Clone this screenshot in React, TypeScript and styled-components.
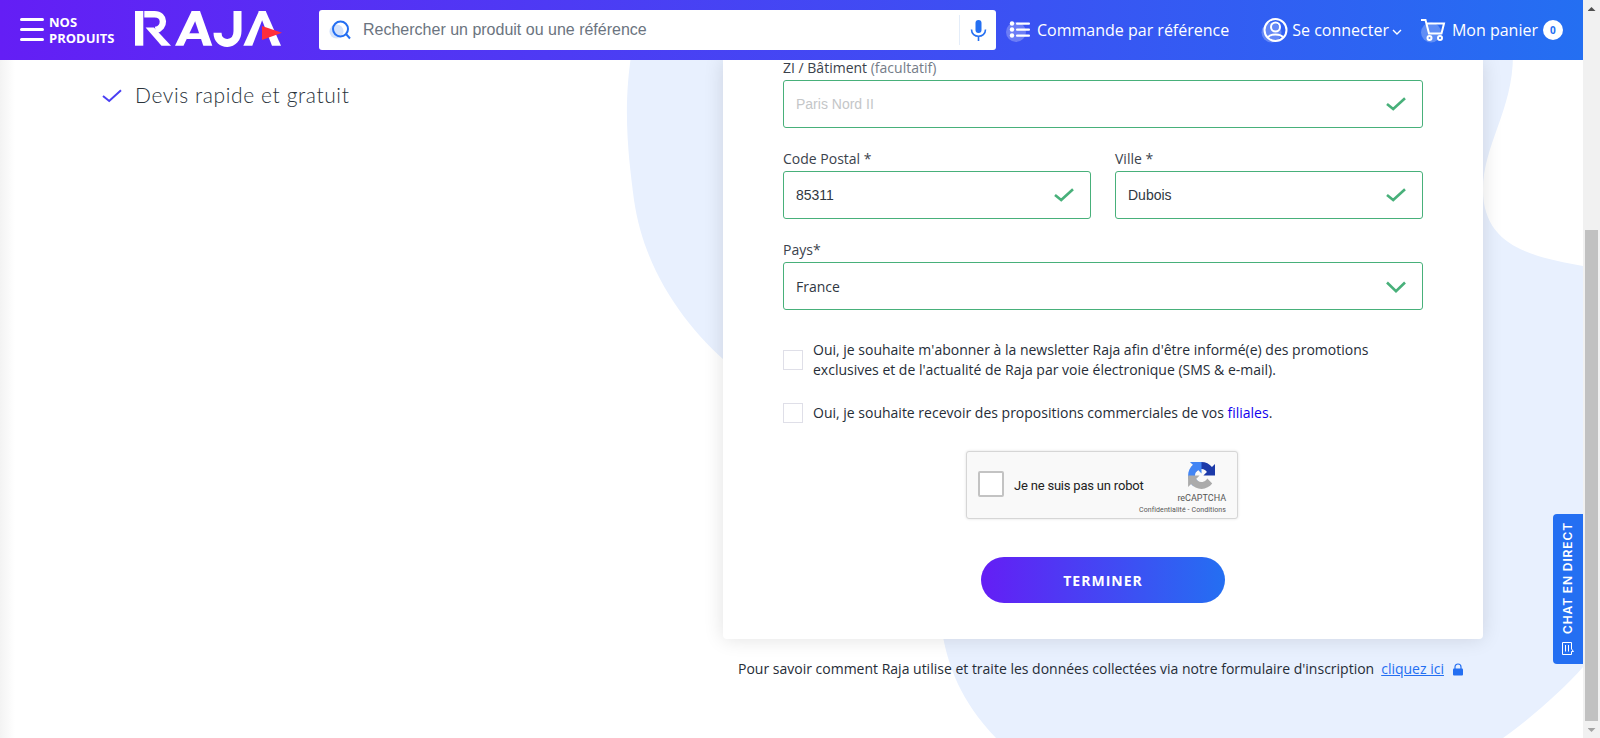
import React from 'react';
import styled, { createGlobalStyle } from 'styled-components';

const Global = createGlobalStyle`
  * { box-sizing: border-box; }
  html, body { margin: 0; padding: 0; background: #fff; overflow: hidden; }
  body { font-family: "Open Sans", sans-serif; color: #333; }
`;

const Window = styled.div`
  display: flex;
  width: 1600px;
  height: 738px;
  overflow: hidden;
`;

const Page = styled.div`
  position: relative;
  width: 1583px;
  height: 738px;
  overflow: hidden;
  display: flex;
  flex-direction: column;
  isolation: isolate;
`;

const Backdrop = styled.svg`
  position: absolute;
  inset: 0;
  z-index: -2;
`;

const EdgeShade = styled.div`
  position: absolute;
  z-index: -1;
  top: 60px;
  left: 0;
  bottom: 0;
  width: 15px;
  background: linear-gradient(90deg, #f3f3f3, #fff);
`;

const Header = styled.header`
  display: flex;
  align-items: center;
  flex: none;
  height: 60px;
  padding-left: 20px;
  background: linear-gradient(90deg, #641ef5, #246ff2);
  color: #fff;
  position: relative;
  z-index: 2;
`;

const MenuLabel = styled.div`
  width: 80px;
  margin-left: 5px;
  font-size: 13px;
  line-height: 16px;
  font-weight: 700;
`;

const Logo = styled.svg`
  margin-left: 6px;
  flex: none;
`;

const SearchBar = styled.div`
  display: flex;
  align-items: center;
  flex: none;
  width: 677px;
  height: 40px;
  margin-left: 37px;
  padding-left: 10px;
  border-radius: 3px;
  background: #fff;
`;

const SearchText = styled.span`
  flex: 1;
  margin-left: 11px;
  font: 16px "Liberation Sans", sans-serif;
  color: #6b7480;
`;

const MicCell = styled.div`
  display: flex;
  align-items: center;
  width: 37px;
  height: 30px;
  padding-left: 10px;
  border-left: 1px solid #e4edf9;
`;

const NavItem = styled.a<{ $left: number; $gap: number }>`
  display: flex;
  align-items: center;
  flex: none;
  margin-left: ${p => p.$left}px;
  gap: ${p => p.$gap}px;
  font-size: 16px;
  white-space: nowrap;
`;

const Caret = styled.svg`
  margin: 4px 0 0 -1px;
`;

const CartCount = styled.span`
  display: flex;
  align-items: center;
  justify-content: center;
  width: 20px;
  height: 20px;
  margin-left: -1px;
  border-radius: 50%;
  background: #fff;
  color: #246ff2;
  font-size: 10px;
  font-weight: 700;
`;

const Main = styled.main`
  display: flex;
  flex: 1;
  min-height: 0;
`;

const Benefits = styled.ul`
  width: 723px;
  margin: 0;
  padding: 18px 0 0 102px;
  list-style: none;
`;

const Benefit = styled.li`
  display: flex;
  align-items: center;
  gap: 13px;
  height: 36px;
  font: 300 21px/32px "Lato", sans-serif;
  letter-spacing: 0.6px;
  color: #2a333b;
`;

const BenefitText = styled.span`
  padding-bottom: 2px;
`;

const FormColumn = styled.section`
  width: 760px;
`;

const Card = styled.form`
  height: 579px;
  padding: 0 60px;
  border-radius: 0 0 4px 4px;
  background: #fff;
  box-shadow: 0 0 20px rgba(0, 0, 0, 0.12);
  display: flex;
  flex-direction: column;
`;

const FieldRow = styled.div`
  display: flex;
  gap: 24px;
  margin-bottom: 23px;
`;

const Field = styled.label`
  flex: 1;
  display: flex;
  flex-direction: column;
  font-size: 14px;
  color: #3b424c;
`;

const FieldName = styled.span`
  height: 20px;
  line-height: 16px;
`;

const Optional = styled.span`
  color: #757c88;
`;

const Control = styled.span<{ $placeholder?: boolean; $select?: boolean }>`
  display: flex;
  align-items: center;
  justify-content: space-between;
  height: 48px;
  padding: ${p => (p.$select ? '1px 16px 0 12px' : '0 16px 0 12px')};
  border: 1px solid #48b07a;
  border-radius: 3px;
  font-family: ${p => (p.$select ? '"Open Sans"' : '"Liberation Sans"')}, sans-serif;
  color: ${p => (p.$placeholder ? '#c4c6c8' : '#2f3742')};
`;

const Consent = styled.label<{ $top: number }>`
  display: flex;
  align-items: center;
  gap: 10px;
  margin-top: ${p => p.$top}px;
  font-size: 14px;
  line-height: 20px;
  color: #262d37;
  white-space: nowrap;
`;

const Tick = styled.span`
  flex: none;
  width: 20px;
  height: 20px;
  border: 1px solid #dfdfe8;
  background: #fff;
`;

const Affiliates = styled.a`
  color: #1200ee;
`;

const Captcha = styled.div`
  display: flex;
  align-self: center;
  align-items: center;
  width: 272px;
  height: 68px;
  margin: 28px 2px 0 0;
  padding: 0 0 2px 11px;
  border: 1px solid #d6d6d6;
  border-radius: 3px;
  background: #f9f9f9;
  box-shadow: 0 0 3px rgba(0, 0, 0, 0.12);
  font-family: Roboto, sans-serif;
`;

const CaptchaBox = styled.span`
  width: 26px;
  height: 26px;
  border: 2px solid #c3c3c3;
  border-radius: 2px;
  background: #fff;
`;

const CaptchaText = styled.span`
  flex: 1;
  margin: 2px 0 0 10px;
  font-size: 13px;
  letter-spacing: -0.2px;
  color: #222;
  white-space: nowrap;
`;

const CaptchaBrand = styled.div`
  display: flex;
  flex-direction: column;
  align-items: flex-end;
  width: 90px;
  padding: 10px 11px 0 0;
  color: #555;
  white-space: nowrap;
`;

const BrandMark = styled.svg`
  margin-right: 11px;
`;

const BrandName = styled.span`
  margin-top: 4px;
  font-size: 9px;
  line-height: 11px;
`;

const BrandLinks = styled.span`
  font-size: 7px;
  line-height: 12px;
  letter-spacing: 0.1px;
`;

const Submit = styled.button`
  align-self: center;
  width: 244px;
  height: 46px;
  margin-top: 38px;
  border: 0;
  border-radius: 23px;
  background: linear-gradient(90deg, #641ef5, #246ff2);
  color: #fff;
  font: 700 14px "Open Sans", sans-serif;
  letter-spacing: 1px;
`;

const Privacy = styled.p`
  display: flex;
  align-items: center;
  margin: 20px 0 0 15px;
  font-size: 14px;
  line-height: 20px;
  color: #262d37;
  white-space: nowrap;
`;

const PrivacyLink = styled.a`
  margin: 0 9px 0 7px;
  color: #246ff2;
  text-decoration: underline;
`;

const ChatTab = styled.div`
  position: absolute;
  right: 0;
  top: 514px;
  width: 30px;
  height: 150px;
  padding-bottom: 9px;
  border-radius: 4px 0 0 4px;
  background: #246ff2;
  color: #fff;
  display: flex;
  flex-direction: column;
  align-items: center;
  justify-content: flex-end;
  gap: 8px;
`;

const ChatText = styled.span`
  writing-mode: vertical-rl;
  transform: rotate(180deg);
  font: 600 12px/30px Inter, sans-serif;
  letter-spacing: 0.88px;
  white-space: nowrap;
`;

const Scrollbar = styled.div`
  display: flex;
  flex-direction: column;
  align-items: center;
  width: 17px;
  background: #f1f1f1;
`;

const Arrow = styled.span<{ $down?: boolean }>`
  width: 8px;
  height: 4px;
  background: ${p => (p.$down ? '#a3a3a3' : '#505050')};
  clip-path: ${p => (p.$down ? 'polygon(0 0, 100% 0, 50% 100%)' : 'polygon(0 100%, 50% 0, 100% 100%)')};
  margin-top: 7px;
`;

const Thumb = styled.div`
  width: 13px;
  height: 491px;
  margin-top: 219px;
  background: #c1c1c1;
`;

const Check = ({ color = '#48b07a', width = 2.6 }) => (
  <svg width="20" height="14" viewBox="0 0 20 14" fill="none" stroke={color} strokeWidth={width}>
    <path d="M1 7 L7.2 12 L19 1.2" />
  </svg>
);

export default function App() {
  return (
    <Window>
      <Global />
      <Page>
        <Backdrop width="1583" height="738" viewBox="0 0 1583 738" fill="#e8f0fe">
          <path d="M632 50C622 110 629 160 634 200C644 270 685 327 730 365L1000 365L943 637C949 667 960 700 996 738L1503 738C1530 719 1565 688 1583 667L1583 266C1532 257 1483 246 1483 190C1483 145 1513 110 1513 55Z" />
        </Backdrop>
        <EdgeShade />
        <Header>
          <svg width="24" height="24" viewBox="0 0 24 24" stroke="#fff" strokeWidth="3" strokeLinecap="round">
            <path d="M1.5 1.500H22.500M1.500 11.500H22.500M1.500 21.500H22.500" />
          </svg>
          <MenuLabel>NOS PRODUITS</MenuLabel>
          <Logo width="147" height="38" viewBox="0 0 147 38" fill="#fff">
            <path d="M0 0H8.300V34.700H0Z" />
            <path d="M9.300 3.200H19.500C30.500 3.200 30.500 17 20.500 19" fill="none" stroke="#fff" strokeWidth="6.400" />
            <path d="M10.600 16.500H19L36 34.700H26.500Z" />
            <path d="M40 34.700L56.700 0H65L48.500 34.700Z" />
            <path d="M56.700 0H65L77.300 34.700H68.300Z" />
            <path d="M51.500 22.300H70V28H51.500Z" />
            <path d="M102.500 0V20C102.500 35.600 82.500 35.600 82.500 21.700" fill="none" stroke="#fff" strokeWidth="8" />
            <path d="M108.300 34.700L124 0H130.700L117.300 34.700Z" />
            <path d="M123.500 0H130.700L146 34.700H137Z" />
            <path d="M127 15L147 21.700L127 29Z" fill="#ff2d3b" />
          </Logo>
          <SearchBar>
            <svg width="23" height="22" viewBox="0 0 23 22" fill="none">
              <circle cx="7.500" cy="12.500" r="7" fill="#d3e2fc" />
              <circle cx="11.500" cy="10" r="7.500" stroke="#246ff2" strokeWidth="2" />
              <path d="M17 15L21 19.500" stroke="#246ff2" strokeWidth="2" />
            </svg>
            <SearchText>Rechercher un produit ou une référence</SearchText>
            <MicCell>
              <svg width="17" height="22" viewBox="0 0 17 22" fill="none" stroke="#246ff2" strokeWidth="1.600">
                <rect x="5.500" y="1" width="6" height="13" rx="3" fill="#246ff2" stroke="none" />
                <path d="M1.500 10.500C1.500 19.500 15.500 19.500 15.500 10.500M8.500 17V22" />
              </svg>
            </MicCell>
          </SearchBar>
          <NavItem $left={10} $gap={6}>
            <svg width="25" height="24" viewBox="0 0 25 24" fill="#fff">
              <circle cx="10" cy="14" r="10" opacity="0.25" />
              <circle cx="6" cy="5.500" r="2.200" />
              <circle cx="6" cy="11.500" r="2.200" />
              <circle cx="6" cy="17.500" r="2.200" />
              <rect x="10" y="4.500" width="14" height="2.200" rx="1" />
              <rect x="10" y="10.500" width="14" height="2.200" rx="1" />
              <rect x="10" y="16.500" width="14" height="2.200" rx="1" />
            </svg>
            Commande par référence
          </NavItem>
          <NavItem $left={32} $gap={4}>
            <svg width="27" height="26" viewBox="0 0 27 26" fill="none" stroke="#fff" strokeWidth="2">
              <circle cx="10.500" cy="15.500" r="10" fill="#fff" opacity="0.25" stroke="none" />
              <circle cx="14.500" cy="13" r="11" />
              <circle cx="14.500" cy="10" r="4.500" />
              <path d="M7 20.500C9 16.500 20 16.500 22 20.500" />
            </svg>
            Se connecter
            <Caret width="10" height="8" viewBox="0 0 10 8" fill="none" stroke="#fff" strokeWidth="1.400">
              <path d="M1 2L5 6L9 2" />
            </Caret>
          </NavItem>
          <NavItem $left={19} $gap={6}>
            <svg width="25" height="26" viewBox="0 0 25 26" fill="none" stroke="#fff" strokeWidth="2">
              <circle cx="10" cy="15.500" r="10" fill="#fff" opacity="0.25" stroke="none" />
              <path d="M0 3H4.500L8 16.500H20.500L23 6.500H5.500" />
              <circle cx="8.500" cy="21" r="2" />
              <circle cx="19" cy="21" r="2" />
            </svg>
            Mon panier
            <CartCount>0</CartCount>
          </NavItem>
        </Header>
        <Main>
          <Benefits>
            <Benefit>
              <Check color="#4a3ff3" width={2} />
              <BenefitText>Devis rapide et gratuit</BenefitText>
            </Benefit>
          </Benefits>
          <FormColumn>
            <Card>
              <FieldRow>
                <Field>
                  <FieldName>ZI / Bâtiment <Optional>(facultatif)</Optional></FieldName>
                  <Control $placeholder>Paris Nord II<Check /></Control>
                </Field>
              </FieldRow>
              <FieldRow>
                <Field>
                  <FieldName>Code Postal *</FieldName>
                  <Control>85311<Check /></Control>
                </Field>
                <Field>
                  <FieldName>Ville *</FieldName>
                  <Control>Dubois<Check /></Control>
                </Field>
              </FieldRow>
              <FieldRow>
                <Field>
                  <FieldName>Pays*</FieldName>
                  <Control $select>
                    France
                    <svg width="20" height="12" viewBox="0 0 20 12" fill="none" stroke="#48b07a" strokeWidth="2.600">
                      <path d="M1 1.500L10 10.200L19 1.500" />
                    </svg>
                  </Control>
                </Field>
              </FieldRow>
              <Consent $top={7}>
                <Tick />
                <span>
                  Oui, je souhaite m'abonner à la newsletter Raja afin d'être informé(e) des promotions
                  <br />
                  exclusives et de l'actualité de Raja par voie électronique (SMS &amp; e-mail).
                </span>
              </Consent>
              <Consent $top={23}>
                <Tick />
                <span>Oui, je souhaite recevoir des propositions commerciales de vos <Affiliates>filiales</Affiliates>.</span>
              </Consent>
              <Captcha>
                <CaptchaBox />
                <CaptchaText>Je ne suis pas un robot</CaptchaText>
                <CaptchaBrand>
                  <BrandMark width="27" height="27" viewBox="0 0 64 64">
                    <path fill="#1c3aa9" d="M64 32l0-1.400V4.700l-7.200 7.200C51 4.700 42 .2 32 .2c-10.400 0-19.600 5-25.400 12.600l11.700 11.900c1.100-2.100 2.700-3.900 4.700-5.300 2-1.600 4.900-2.900 8.900-2.900.5 0 .9.100 1.100.2 5 .4 9.300 3.100 11.800 7.100l-8.300 8.300Z" />
                    <path fill="#4285f4" d="M32 0H4.700l7.200 7.200C4.700 13 .2 22 .2 32c0 10.400 5 19.600 12.600 25.400l11.900-11.700c-2.100-1.100-3.900-2.700-5.300-4.700-1.600-2-2.900-4.900-2.900-8.900 0-.5.100-.9.200-1.100.4-5 3.100-9.300 7.100-11.800l8.300 8.300Z" />
                    <path fill="#ababab" d="M.2 32v27.300l7.200-7.200C13 59.300 22 63.800 32 63.800c10.400 0 19.600-5 25.400-12.600L45.700 39.300c-1.100 2.100-2.700 3.900-4.700 5.300-2 1.600-4.900 2.900-8.900 2.900-.5 0-.9-.1-1.100-.2-5-.4-9.300-3.100-11.800-7.100l8.300-8.300Z" />
                  </BrandMark>
                  <BrandName>reCAPTCHA</BrandName>
                  <BrandLinks>Confidentialité - Conditions</BrandLinks>
                </CaptchaBrand>
              </Captcha>
              <Submit type="button">TERMINER</Submit>
            </Card>
            <Privacy>
              Pour savoir comment Raja utilise et traite les données collectées via notre formulaire d'inscription
              <PrivacyLink>cliquez ici</PrivacyLink>
              <svg width="10" height="13" viewBox="0 0 10 13" fill="none" stroke="#246ff2">
                <path d="M2 6V4C2 0 8 0 8 4V6" strokeWidth="1.200" />
                <rect x="0" y="5.500" width="10" height="7" rx="1" fill="#246ff2" stroke="none" />
              </svg>
            </Privacy>
          </FormColumn>
        </Main>
        <ChatTab>
          <ChatText>CHAT EN DIRECT</ChatText>
          <svg width="12" height="13" viewBox="0 0 12 13" fill="none" stroke="#fff">
            <path d="M.5 .5H9.500V7L11.500 9.500H9.500V12.500H.5ZM3.500 3V9.500M6.500 3V9.500" />
          </svg>
        </ChatTab>
      </Page>
      <Scrollbar>
        <Arrow />
        <Thumb />
        <Arrow $down />
      </Scrollbar>
    </Window>
  );
}
